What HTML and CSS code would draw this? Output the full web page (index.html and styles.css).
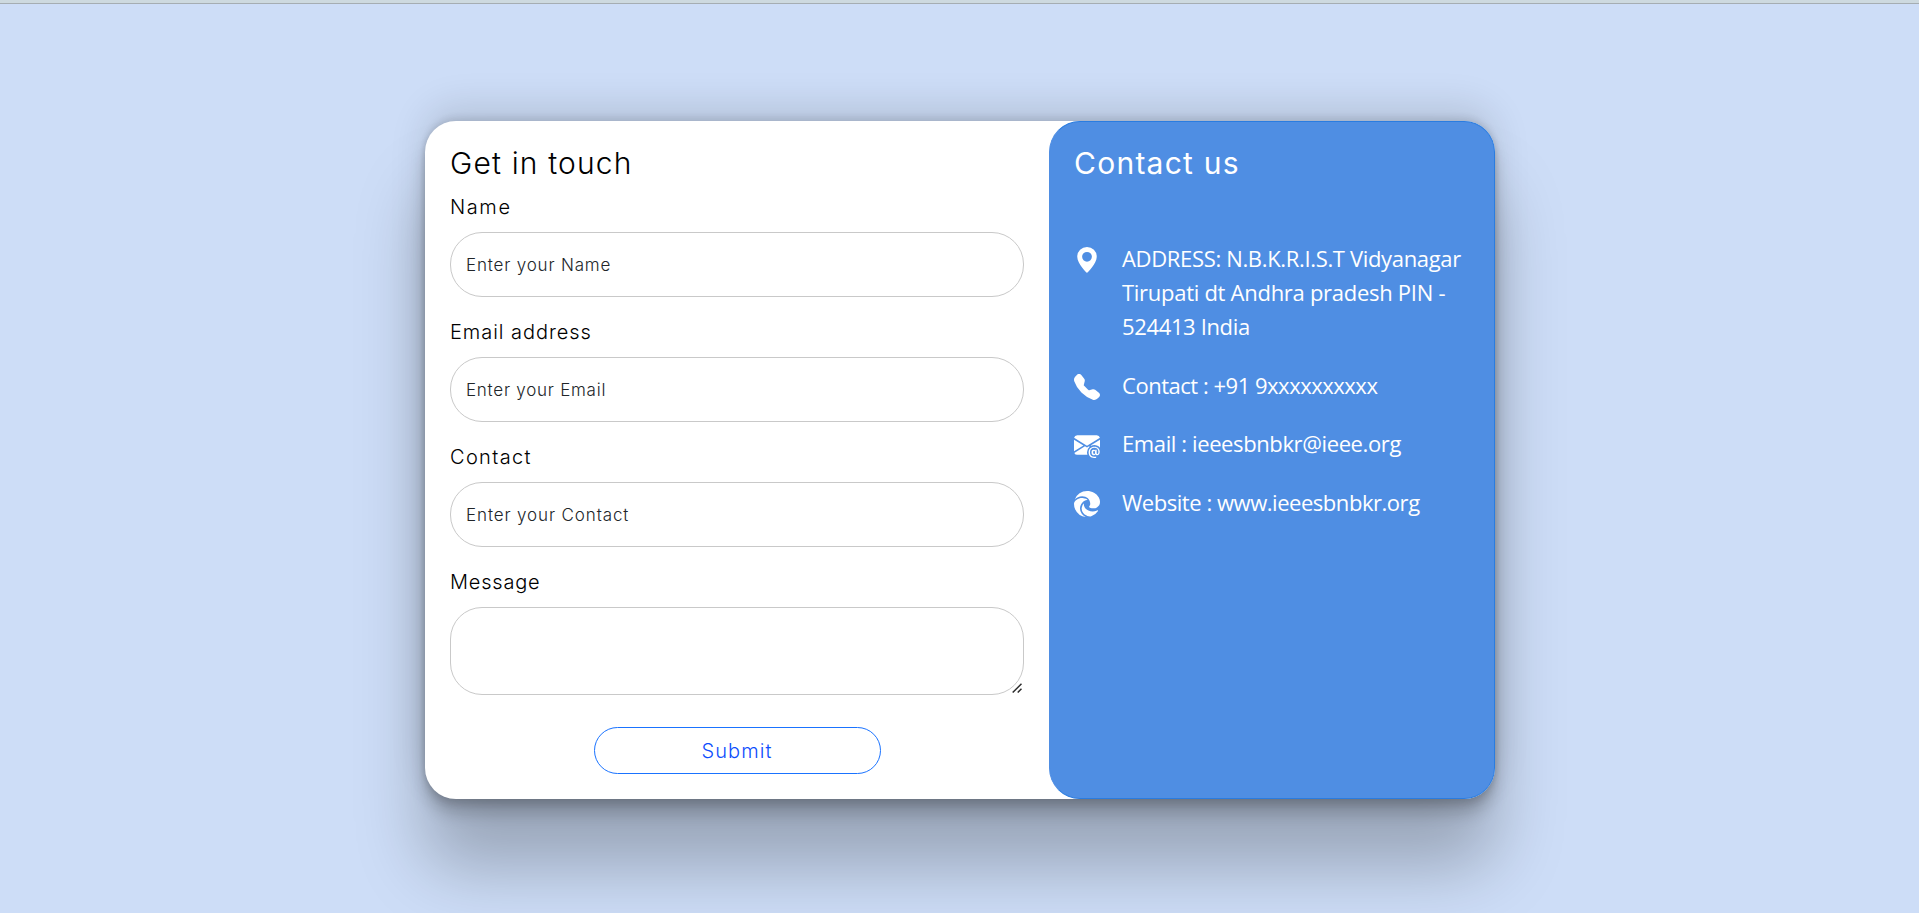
FILE: index.html
```html
<!DOCTYPE html>
<html lang="en">
<head>
<meta charset="utf-8">
<title>Contact us</title>
<link rel="stylesheet" href="styles.css">
</head>
<body>
<div class="topbar"></div>
<main class="card">
  <form class="form">
    <h1 class="title"><span class="t-touch">Get in touch</span></h1>
    <div class="field">
      <label class="label l-name" for="name">Name</label>
      <input class="input p-name" id="name" type="text" placeholder="Enter your Name">
    </div>
    <div class="field">
      <label class="label l-email" for="email">Email address</label>
      <input class="input p-email" id="email" type="email" placeholder="Enter your Email">
    </div>
    <div class="field">
      <label class="label l-contact" for="contact">Contact</label>
      <input class="input p-contact" id="contact" type="text" placeholder="Enter your Contact">
    </div>
    <div class="field field-message">
      <label class="label l-message" for="message">Message</label>
      <textarea class="input area" id="message"></textarea>
      <svg class="grip" viewBox="0 0 10 10"><path d="M.7 9.5 9.5.7M5.7 9.5l3.8-3.8"/></svg>
    </div>
    <button class="submit" type="button">Submit</button>
  </form>
  <section class="info">
    <h2 class="title"><span class="t-contact">Contact us</span></h2>
    <ul class="list">
      <li class="item">
        <svg class="icon" viewBox="0 0 16 16"><path d="M8 16s6-5.686 6-10A6 6 0 0 0 2 6c0 4.314 6 10 6 10m0-7a3 3 0 1 1 0-6 3 3 0 0 1 0 6"/></svg>
        <p class="text"><span class="a1">ADDRESS: N.B.K.R.I.S.T Vidyanagar</span><br><span class="a2">Tirupati dt Andhra pradesh PIN -</span><br><span class="a3">524413 India</span></p>
      </li>
      <li class="item">
        <svg class="icon" viewBox="0 0 16 16"><path d="M1.885.511a1.745 1.745 0 0 1 2.61.163L6.29 2.98c.329.423.445.974.315 1.494l-.547 2.19a.68.68 0 0 0 .178.643l2.457 2.457a.68.68 0 0 0 .644.178l2.189-.547a1.75 1.75 0 0 1 1.494.315l2.306 1.794c.829.645.905 1.87.163 2.611l-1.034 1.034c-.74.74-1.846 1.065-2.877.702a18.6 18.6 0 0 1-7.01-4.42 18.6 18.6 0 0 1-4.42-7.009c-.362-1.03-.037-2.137.703-2.877z"/></svg>
        <p class="text"><span class="a4">Contact : +91 9xxxxxxxxxx</span></p>
      </li>
      <li class="item">
        <svg class="icon" viewBox="0 0 16 16"><path d="M2 2A2 2 0 0 0 .05 3.555L8 8.414l7.95-4.859A2 2 0 0 0 14 2zm-2 9.8V4.698l5.803 3.546zm6.761-2.97-6.57 4.026A2 2 0 0 0 2 14h6.256A4.5 4.5 0 0 1 8 12.5a4.49 4.49 0 0 1 1.606-3.446l-.367-.225L8 9.586zM16 9.671V4.697l-5.803 3.546.338.208A4.5 4.5 0 0 1 12.5 8c1.414 0 2.675.652 3.5 1.671"/><path d="M15.834 12.244c0 1.168-.577 2.025-1.587 2.025-.503 0-1.002-.228-1.12-.648h-.043c-.118.416-.543.643-1.015.643-.77 0-1.259-.542-1.259-1.434v-.529c0-.844.481-1.4 1.26-1.4.585 0 .87.333.953.63h.03v-.568h.905v2.19c0 .272.18.42.411.42.315 0 .639-.415.639-1.39v-.118c0-1.277-.95-2.326-2.484-2.326h-.04c-1.582 0-2.64 1.067-2.64 2.724v.157c0 1.867 1.237 2.654 2.57 2.654h.045c.507 0 .935-.07 1.18-.18v.731c-.219.1-.643.175-1.237.175h-.044C10.438 16 9 14.82 9 12.646v-.214C9 10.36 10.421 9 12.485 9h.035c2.12 0 3.314 1.43 3.314 3.034zm-4.04.21v.227c0 .586.227.8.581.8.31 0 .564-.17.564-.743v-.367c0-.516-.275-.708-.572-.708-.346 0-.573.245-.573.791"/></svg>
        <p class="text"><span class="a5">Email : ieeesbnbkr@ieee.org</span></p>
      </li>
      <li class="item">
        <svg class="icon" viewBox="0 0 16 16"><path d="M9.482 9.341c-.069.062-.17.153-.17.309 0 .162.107.325.3.456.877.613 2.521.54 2.592.538h.002c.667 0 1.32-.18 1.894-.519A3.84 3.84 0 0 0 16 6.819c.018-1.316-.44-2.218-.666-2.664l-.04-.08C13.963 1.487 11.106 0 8 0A8 8 0 0 0 .473 5.29C1.488 4.048 3.183 3.262 5 3.262c2.83 0 5.01 1.885 5.01 4.797h-.004v.002c0 .338-.168.832-.487 1.244l.006-.006z"/><path d="M.01 7.753a8.14 8.14 0 0 0 .753 3.641 8 8 0 0 0 6.495 4.564 5 5 0 0 1-.785-.377h-.01l-.12-.075a5.5 5.5 0 0 1-1.56-1.463A5.543 5.543 0 0 1 6.81 5.8l.01-.004.025-.012c.208-.098.62-.292 1.167-.285q.194.001.384.033a4 4 0 0 0-.993-.698l-.01-.005C6.348 4.282 5.199 4.263 5 4.263c-2.44 0-4.824 1.634-4.99 3.49"/><path d="M10.228 15.667a5 5 0 0 0 .303-.086l.082-.025a8.02 8.02 0 0 0 4.162-3.3.25.25 0 0 0-.331-.35q-.322.168-.663.294a6.4 6.4 0 0 1-2.243.4c-2.957 0-5.532-2.031-5.532-4.644q.003-.203.046-.399a4.54 4.54 0 0 0-.46 5.898l.003.005c.315.441.707.821 1.158 1.121h.003l.144.09c.877.55 1.721 1.078 3.328.996"/></svg>
        <p class="text"><span class="a6">Website : www.ieeesbnbkr.org</span></p>
      </li>
    </ul>
  </section>
</main>
</body>
</html>
```
FILE: styles.css
```css
* { box-sizing: border-box; }
body {
  margin: 0;
  height: 913px;
  overflow: hidden;
  background: #cdddf7;
  font-family: Inter, "Liberation Sans", sans-serif;
  color: #000;
}
.topbar {
  height: 4px;
  background: #cdd9df;
  border-bottom: 1px solid #a5adb2;
}
.card {
  display: flex;
  width: 1070px;
  height: 678px;
  margin: 117px 0 0 425px;
  border-radius: 31px;
  background: #fff;
  box-shadow: rgba(0,0,0,.25) 0 67.5px 68.75px, rgba(0,0,0,.12) 0 -15px 37.5px, rgba(0,0,0,.12) 0 5px 7.5px, rgba(0,0,0,.17) 0 15px 16.25px, rgba(0,0,0,.09) 0 -3.75px 6.25px;
}
.form {
  display: flex;
  flex-direction: column;
  width: 624px;
  padding: 24px 25px 0;
}
.title {
  margin: 0;
  height: 46px;
  font-size: 30px;
  font-weight: 300;
  line-height: 36px;
  white-space: nowrap;
}
.t-touch { letter-spacing: 1.15px; }
.t-contact { letter-spacing: 1.25px; }
.field {
  display: flex;
  flex-direction: column;
  flex: none;
  height: 125px;
}
.field-message { position: relative; height: auto; }
.label {
  flex: none;
  height: 41px;
  font-size: 20px;
  font-weight: 300;
  line-height: 32px;
}
.l-name { letter-spacing: 1.6px; }
.l-email { letter-spacing: .95px; }
.l-contact { letter-spacing: 1.35px; }
.l-message { letter-spacing: .8px; }
.input {
  flex: none;
  width: 574px;
  height: 65px;
  margin: 0;
  padding: 0 15px;
  border: 1px solid #c9c9c9;
  border-radius: 32px;
  background: #fff;
  font-family: inherit;
  font-size: 17px;
  font-weight: 300;
  outline: none;
}
.input::placeholder { color: #212529; opacity: 1; }
.p-name { letter-spacing: .82px; }
.p-email { letter-spacing: .75px; }
.p-contact { letter-spacing: .88px; }
.area { height: 88px; resize: none; }
.grip {
  position: absolute;
  right: 2px;
  bottom: 2px;
  width: 10px;
  height: 10px;
  fill: none;
  stroke: #2b2b2b;
  stroke-width: 1.5;
}
.submit {
  flex: none;
  align-self: center;
  width: 287px;
  height: 47px;
  margin-top: 32px;
  padding: 0;
  border: 1px solid #1a73ff;
  border-radius: 24px;
  background: #fff;
  color: #0d4dfd;
  font-family: inherit;
  font-size: 20px;
  font-weight: 300;
  letter-spacing: 1.1px;
}
.info {
  width: 446px;
  padding: 23px 24px 0;
  border: 1px solid #2a7ce0;
  border-left-color: #4f8ee3;
  border-radius: 31px;
  background: #4f8ee3;
  color: #fff;
}
.info .title { font-weight: 400; }
.list {
  display: flex;
  flex-direction: column;
  gap: 24.6px;
  margin: 50px 0 0;
  padding: 0;
  list-style: none;
}
.item { display: flex; gap: 22px; }
.icon { width: 26px; height: 26px; margin-top: 6px; fill: #fff; flex: none; }
.text {
  margin: 0;
  font-family: "Open Sans", "Noto Sans", sans-serif;
  font-size: 22px;
  line-height: 34px;
  white-space: nowrap;
}
.a1 { letter-spacing: -.34px; }
.a2 { letter-spacing: -.28px; }
.a3 { letter-spacing: -.36px; }
.a4 { letter-spacing: -.48px; }
.a5 { letter-spacing: -.39px; }
.a6 { letter-spacing: -.46px; }
```
